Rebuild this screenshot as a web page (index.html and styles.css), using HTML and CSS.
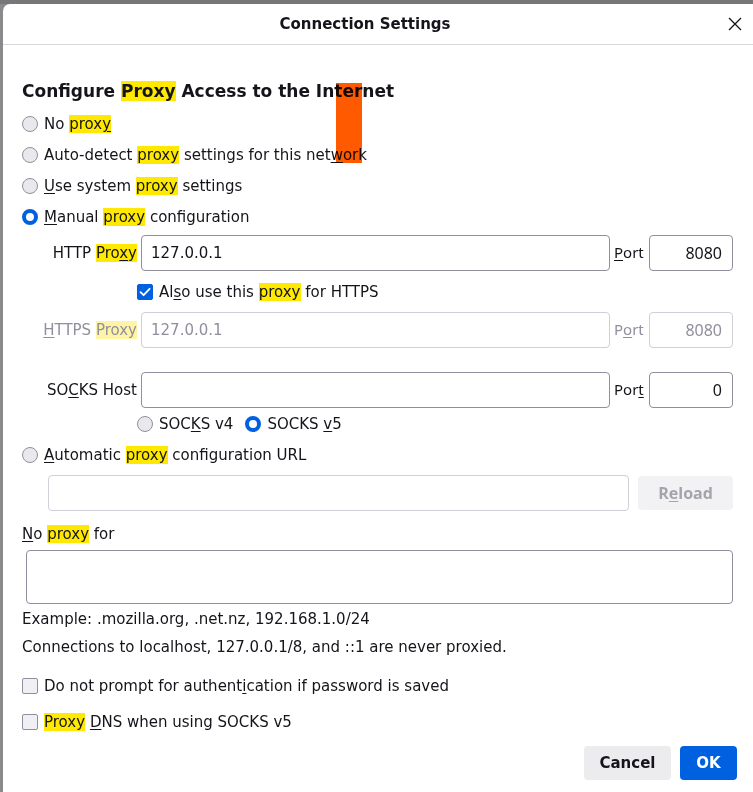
FILE: index.html
```html
<!DOCTYPE html>
<html>
<head>
<meta charset="utf-8">
<link rel="stylesheet" href="styles.css">
</head>
<body>
<div class="backdrop"></div>
<div class="dialog">
  <div class="titlebar">
    <span class="title">Connection Settings</span>
    <span class="close"><svg width="14" height="14" viewBox="0 0 14 14"><path d="M1 1L13 13M13 1L1 13" stroke="#15141a" stroke-width="1.3" fill="none"/></svg></span>
  </div>
  <div class="content">
    <div class="marker"></div>
    <h1 class="heading">Configure <mark class="hl">Proxy</mark> Access to the Internet</h1>
    <div class="opt"><span class="radio"></span><span>No <mark class="hl">prox<u>y</u></mark></span></div>
    <div class="opt"><span class="radio"></span><span>Auto-detect <mark class="hl">proxy</mark> settings for this net<u>w</u>ork</span></div>
    <div class="opt"><span class="radio"></span><span><u>U</u>se system <mark class="hl">proxy</mark> settings</span></div>
    <div class="opt"><span class="radio on"></span><span><u>M</u>anual <mark class="hl">proxy</mark> configuration</span></div>

    <div class="grid">
      <label class="lbl">HTTP <mark class="hl">Pro<u>x</u>y</mark></label>
      <div class="input">127.0.0.1</div>
      <span class="port"><u>P</u>ort</span>
      <div class="input num">8080</div>

      <div class="checkrow"><span class="check on"><svg width="16" height="16" viewBox="0 0 16 16"><path d="M3.5 8.2L6.6 11.2L12.6 4.8" stroke="#fff" stroke-width="1.8" fill="none" stroke-linecap="round" stroke-linejoin="round"/></svg></span><span>Al<u>s</u>o use this <mark class="hl">proxy</mark> for HTTPS</span></div>

      <label class="lbl dis"><u>H</u>TTPS <mark class="hl dim">Proxy</mark></label>
      <div class="input dis">127.0.0.1</div>
      <span class="port dis">P<u>o</u>rt</span>
      <div class="input num dis">8080</div>

      <div class="spacer"></div>

      <label class="lbl">SO<u>C</u>KS Host</label>
      <div class="input"></div>
      <span class="port">Por<u>t</u></span>
      <div class="input num">0</div>

      <div class="socksrow">
        <span class="opt2"><span class="radio"></span><span>SOC<u>K</u>S v4</span></span>
        <span class="opt2"><span class="radio on"></span><span>SOCKS <u>v</u>5</span></span>
      </div>
    </div>

    <div class="opt auto"><span class="radio"></span><span><u>A</u>utomatic <mark class="hl">proxy</mark> configuration URL</span></div>
    <div class="urlrow">
      <div class="input dis url"></div>
      <span class="reload">R<u>e</u>load</span>
    </div>

    <div class="noproxy"><u>N</u>o <mark class="hl">proxy</mark> for</div>
    <div class="textarea"></div>
    <div class="note first">Example: .mozilla.org, .net.nz, 192.168.1.0/24</div>
    <div class="note">Connections to localhost, 127.0.0.1/8, and ::1 are never proxied.</div>

    <div class="opt cb1"><span class="check"></span><span>Do not prompt for authent<u>i</u>cation if password is saved</span></div>
    <div class="opt cb2"><span class="check"></span><span><mark class="hl">Proxy</mark> <u>D</u>NS when using SOCKS v5</span></div>

    <div class="buttons">
      <span class="btn cancel">Cancel</span>
      <span class="btn ok">OK</span>
    </div>
  </div>
</div>
</body>
</html>
```

FILE: styles.css
```css
html, body {
  margin: 0;
  padding: 0;
  width: 753px;
  height: 792px;
  overflow: hidden;
  background: #8a8a8c;
}
body {
  position: relative;
  font-family: "DejaVu Sans", sans-serif;
  font-size: 15px;
  color: #15141a;
}
.backdrop {
  height: 4px;
  background: #77777a;
}
.dialog {
  position: relative;
  margin-left: 3px;
  height: 788px;
  background: #fff;
  border-top-left-radius: 7px;
}
.titlebar {
  height: 40px;
  border-bottom: 1px solid #d7d7db;
  display: flex;
  align-items: center;
  justify-content: center;
  padding-right: 26px;
  position: relative;
}
.title {
  font-weight: bold;
  font-size: 15px;
}
.close {
  position: absolute;
  right: 11px;
  top: 13px;
  width: 14px;
  height: 14px;
  display: flex;
}
.content {
  display: flow-root;
  padding: 0 20px 0 19px;
  position: relative;
}
.marker {
  position: absolute;
  left: 333px;
  top: 38px;
  width: 26px;
  height: 80px;
  background: #ff5a00;
  mix-blend-mode: multiply;
  z-index: 2;
}
mark.hl {
  background: #ffe900;
  color: inherit;
}
mark.hl.dim {
  background: #fff4a6;
}
u {
  text-decoration-thickness: 1px;
  text-underline-offset: 2px;
}
.heading {
  margin: 34px 0 5px 0;
  font-size: 17px;
  line-height: 24px;
  font-weight: bold;
}
.opt {
  display: flex;
  align-items: center;
  gap: 6px;
  height: 31px;
  white-space: nowrap;
}
.radio {
  box-sizing: border-box;
  width: 16px;
  height: 16px;
  border-radius: 50%;
  border: 1px solid #8f8f9d;
  background: #e9e9ed;
  flex: none;
}
.radio.on {
  border: 4px solid #0061e0;
  background: #fff;
}
.check {
  box-sizing: border-box;
  width: 16px;
  height: 16px;
  border-radius: 2px;
  border: 1px solid #8f8f9d;
  background: #f0f0f4;
  flex: none;
  display: flex;
}
.check.on {
  background: #0061e0;
  border-color: #0061e0;
}
.check.on svg { margin: -1px; }

.grid {
  display: grid;
  grid-template-columns: 115px 1fr 31px 84px;
  column-gap: 4px;
  margin-top: 3px;
}
.lbl {
  text-align: right;
  align-self: center;
  white-space: nowrap;
}
.dis { color: #8f8f9d; }
.input {
  box-sizing: border-box;
  height: 36px;
  border: 1px solid #8f8f9d;
  border-radius: 4px;
  padding: 0 9px;
  display: flex;
  align-items: center;
  background: #fff;
}
.input.dis {
  border-color: #cfcfd8;
  color: #8f8f9d;
}
.input.num {
  justify-content: flex-end;
  font-family: "Noto Sans", sans-serif;
  font-size: 16px;
  padding-right: 10px;
}
.port {
  font-family: "Noto Sans", sans-serif;
  align-self: center;
  line-height: 20px;
  margin-top: -2px;
}
.checkrow {
  grid-column: 2 / 5;
  display: flex;
  align-items: center;
  gap: 6px;
  height: 41px;
  margin-left: -4px;
}
.spacer {
  grid-column: 1 / 5;
  height: 24px;
}
.socksrow {
  grid-column: 2 / 5;
  height: 32px;
  display: flex;
  align-items: center;
  margin-left: -4px;
  gap: 12px;
}
.opt2 {
  display: flex;
  align-items: center;
  gap: 6px;
}
.opt.auto { height: 30px; }
.urlrow {
  display: flex;
  align-items: center;
  margin-top: 5px;
  margin-left: 26px;
  gap: 9px;
}
.url {
  width: 582px;
}
.reload {
  box-sizing: border-box;
  width: 95px;
  height: 34px;
  background: #f2f2f4;
  border-radius: 4px;
  color: #a4a4ab;
  font-family: "Open Sans", sans-serif;
  font-weight: bold;
  font-size: 16px;
  display: flex;
  align-items: center;
  justify-content: center;
}
.noproxy {
  margin-top: 11px;
  line-height: 24px;
}
.textarea {
  box-sizing: border-box;
  height: 54px;
  margin: 4px 0 0 4px;
  border: 1px solid #8f8f9d;
  border-radius: 4px;
}
.note {
  line-height: 24px;
  margin-top: 4px;
}
.note.first { margin-top: 3px; }
.opt.cb1 { margin-top: 12px; height: 30px; }
.opt.cb2 { margin-top: 6px; height: 30px; }
.buttons {
  display: flex;
  justify-content: flex-end;
  gap: 9px;
  margin-top: 9px;
  margin-right: -4px;
}
.btn {
  box-sizing: border-box;
  height: 34px;
  border-radius: 4px;
  font-weight: bold;
  display: flex;
  align-items: center;
  justify-content: center;
}
.cancel {
  width: 87px;
  background: #ececee;
  color: #15141a;
}
.ok {
  width: 57px;
  background: #0061e0;
  color: #fff;
}
```
